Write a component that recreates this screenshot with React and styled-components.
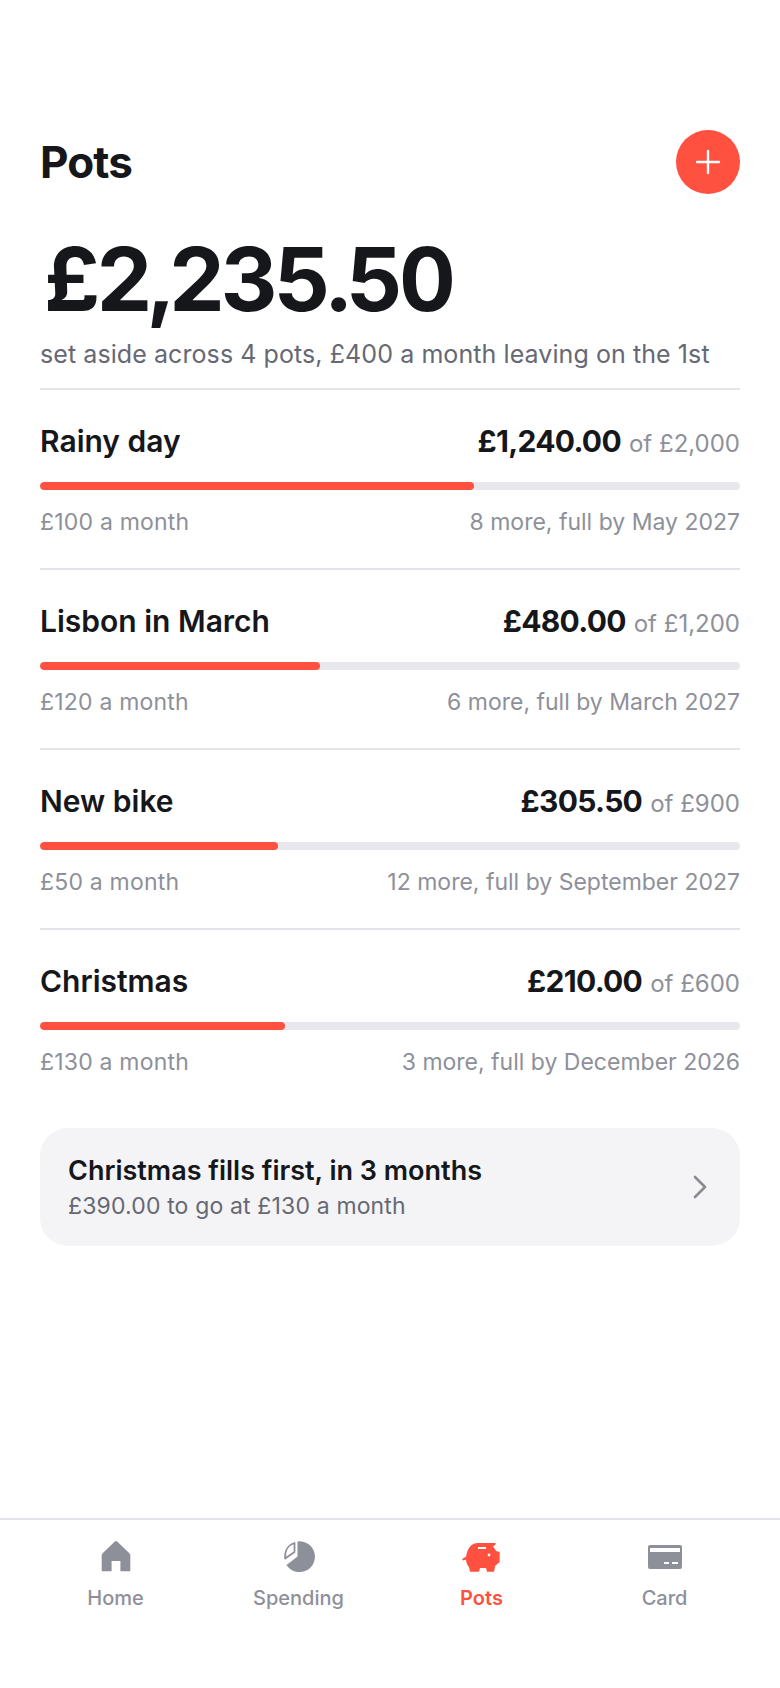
import React from "react";
import styled, { createGlobalStyle } from "styled-components";

const GlobalStyle = createGlobalStyle`
  html, body {
    margin: 0;
    padding: 0;
    background: #fff;
    font-family: Inter, "Liberation Sans", sans-serif;
    color: #16171a;
  }
`;

const Screen = styled.div`
  width: 780px;
  height: 1688px;
  display: flex;
  flex-direction: column;
  background: #fff;
`;

const Main = styled.main`
  flex: 1;
  padding: 130px 40px 0;
`;

const Header = styled.header`
  display: flex;
  justify-content: space-between;
  align-items: center;
  height: 64px;
`;

const Title = styled.h1`
  margin: 0;
  font-size: 44px;
  line-height: 52px;
  font-weight: 700;
  letter-spacing: -0.9px;
`;

const AddButton = styled.button`
  width: 64px;
  height: 64px;
  padding: 0;
  border: none;
  border-radius: 50%;
  background: #ff5040;
  display: flex;
  align-items: center;
  justify-content: center;
`;

const Total = styled.div`
  margin-top: 35px;
  padding-left: 4px;
  font-size: 88px;
  line-height: 100px;
  font-weight: 700;
  font-variant-numeric: tabular-nums;
  letter-spacing: -4.1px;
`;

const Summary = styled.p`
  margin: 9px 0 0;
  font-size: 25px;
  line-height: 32px;
  letter-spacing: 0.08px;
  color: #666873;
`;

const PotList = styled.div`
  margin-top: 18px;
`;

const PotRow = styled.section`
  height: 180px;
  box-sizing: border-box;
  border-top: 2px solid #e4e4e8;
  padding-top: 31px;
`;

const PotTop = styled.div`
  display: flex;
  justify-content: space-between;
  align-items: baseline;
  height: 40px;
`;

const PotName = styled.span`
  font-size: 30px;
  line-height: 40px;
  font-weight: 600;
`;

const Saved = styled.span`
  font-size: 30px;
  font-weight: 700;
  letter-spacing: -0.7px;
`;

const Goal = styled.span`
  margin-left: 8px;
  font-size: 24px;
  color: #8e9099;
`;

const Track = styled.div`
  margin-top: 21px;
  height: 8px;
  border-radius: 4px;
  background: #e8e8ec;
  overflow: hidden;
`;

const Fill = styled.div`
  height: 100%;
  border-radius: 4px;
  background: #ff5040;
`;

const PotBottom = styled.div`
  display: flex;
  justify-content: space-between;
  margin-top: 16px;
  font-size: 23px;
  line-height: 32px;
  color: #8e9099;
`;

const Monthly = styled.span`
  letter-spacing: 0.2px;
`;

const Callout = styled.div`
  margin-top: 20px;
  height: 118px;
  box-sizing: border-box;
  padding: 0 33px 0 28px;
  border-radius: 28px;
  background: #f4f4f6;
  display: flex;
  align-items: center;
  justify-content: space-between;
`;

const CalloutTitle = styled.div`
  font-size: 27px;
  line-height: 34px;
  font-weight: 600;
`;

const CalloutText = styled.div`
  margin-top: 3px;
  font-size: 23px;
  line-height: 30px;
  letter-spacing: 0.15px;
  color: #666873;
`;

const Nav = styled.nav`
  height: 170px;
  box-sizing: border-box;
  border-top: 2px solid #e4e4e8;
  padding: 20px 24px 0;
  display: grid;
  grid-template-columns: repeat(4, 1fr);
  align-content: start;
`;

const NavItem = styled.div`
  display: flex;
  flex-direction: column;
  align-items: center;
  gap: 8px;
  font-size: 20px;
  line-height: 28px;
  font-weight: ${p => (p.$active ? 600 : 500)};
  color: ${p => (p.$active ? "#ff5040" : "#8e9099")};
`;

const NavIcon = styled.svg`
  width: ${p => p.$width || 36}px;
  height: 36px;
  fill: currentColor;
`;

const pots = [
  { name: "Rainy day", saved: "£1,240.00", goal: "£2,000", pct: 62, monthly: "£100 a month", eta: "8 more, full by May 2027" },
  { name: "Lisbon in March", saved: "£480.00", goal: "£1,200", pct: 40, monthly: "£120 a month", eta: "6 more, full by March 2027" },
  { name: "New bike", saved: "£305.50", goal: "£900", pct: 34, monthly: "£50 a month", eta: "12 more, full by September 2027" },
  { name: "Christmas", saved: "£210.00", goal: "£600", pct: 35, monthly: "£130 a month", eta: "3 more, full by December 2026" },
];

export default function App() {
  return (
    <Screen>
      <GlobalStyle />
      <Main>
        <Header>
          <Title>Pots</Title>
          <AddButton aria-label="Add pot">
            <svg width="28" height="28" viewBox="0 0 28 28" fill="none" stroke="#fff" strokeWidth="2.4" strokeLinecap="round">
              <path d="M14 3v22M3 14h22" />
            </svg>
          </AddButton>
        </Header>
        <Total>£2,235.50</Total>
        <Summary>set aside across 4 pots, £400 a month leaving on the 1st</Summary>
        <PotList>
          {pots.map(pot => (
            <PotRow key={pot.name}>
              <PotTop>
                <PotName>{pot.name}</PotName>
                <span>
                  <Saved>{pot.saved}</Saved>
                  <Goal>of {pot.goal}</Goal>
                </span>
              </PotTop>
              <Track>
                <Fill style={{ width: `${pot.pct}%` }} />
              </Track>
              <PotBottom>
                <Monthly>{pot.monthly}</Monthly>
                <span>{pot.eta}</span>
              </PotBottom>
            </PotRow>
          ))}
        </PotList>
        <Callout>
          <div>
            <CalloutTitle>Christmas fills first, in 3 months</CalloutTitle>
            <CalloutText>£390.00 to go at £130 a month</CalloutText>
          </div>
          <svg width="14" height="24" viewBox="0 0 14 24" fill="none" stroke="#8a8b92" strokeWidth="2.6" strokeLinecap="round" strokeLinejoin="round">
            <path d="M2 2l10 10L2 22" />
          </svg>
        </Callout>
      </Main>
      <Nav>
        <NavItem>
          <NavIcon viewBox="0 0 36 36">
            <path d="M16.800 1.500a1.700 1.700 0 0 1 2.400 0L31.600 13.500a2 2 0 0 1 .7 1.500V30a1 1 0 0 1-1 1.200H22.400V21H13.600V31.200H4.700a1 1 0 0 1-1-1.200V15a2 2 0 0 1 .7-1.500Z" />
          </NavIcon>
          Home
        </NavItem>
        <NavItem>
          <NavIcon viewBox="0 0 36 36">
            <path d="M16.500 1.400A15.400 15.400 0 1 1 5.500 24.900L16.500 16.500Z" />
            <path d="M13.500 3V12L4.200 18.600C3.500 11 7 5 13.500 3Z" fill="none" stroke="currentColor" strokeWidth="1.800" strokeLinejoin="round" />
          </NavIcon>
          Spending
        </NavItem>
        <NavItem $active>
          <NavIcon viewBox="0 0 40 36" $width={40}>
            <path fillRule="evenodd" d="M16 3H33.500V4.200L31 7C32.500 8.200 33.500 9.700 34 11L37.700 12V22L33 26C32.800 28 32.500 30 32 31.700H25L24 28H18L17 31.700H8L7 27C5.200 25 4.200 22.500 4 19.500L1.200 20.500L0 19L4.200 16.500C5 9 9 3 16 3ZM16 7V9H24V7ZM27 13.600A1.400 1.400 0 1 0 27 16.400A1.400 1.400 0 1 0 27 13.600Z" />
          </NavIcon>
          Pots
        </NavItem>
        <NavItem>
          <NavIcon viewBox="0 0 36 36">
            <path fillRule="evenodd" d="M3 5h30a2 2 0 0 1 2 2v20a2 2 0 0 1-2 2H3a2 2 0 0 1-2-2V7a2 2 0 0 1 2-2ZM3 8v4h30V8ZM17 22v2h5v-2ZM25 22v2h6v-2Z" />
          </NavIcon>
          Card
        </NavItem>
      </Nav>
    </Screen>
  );
}
